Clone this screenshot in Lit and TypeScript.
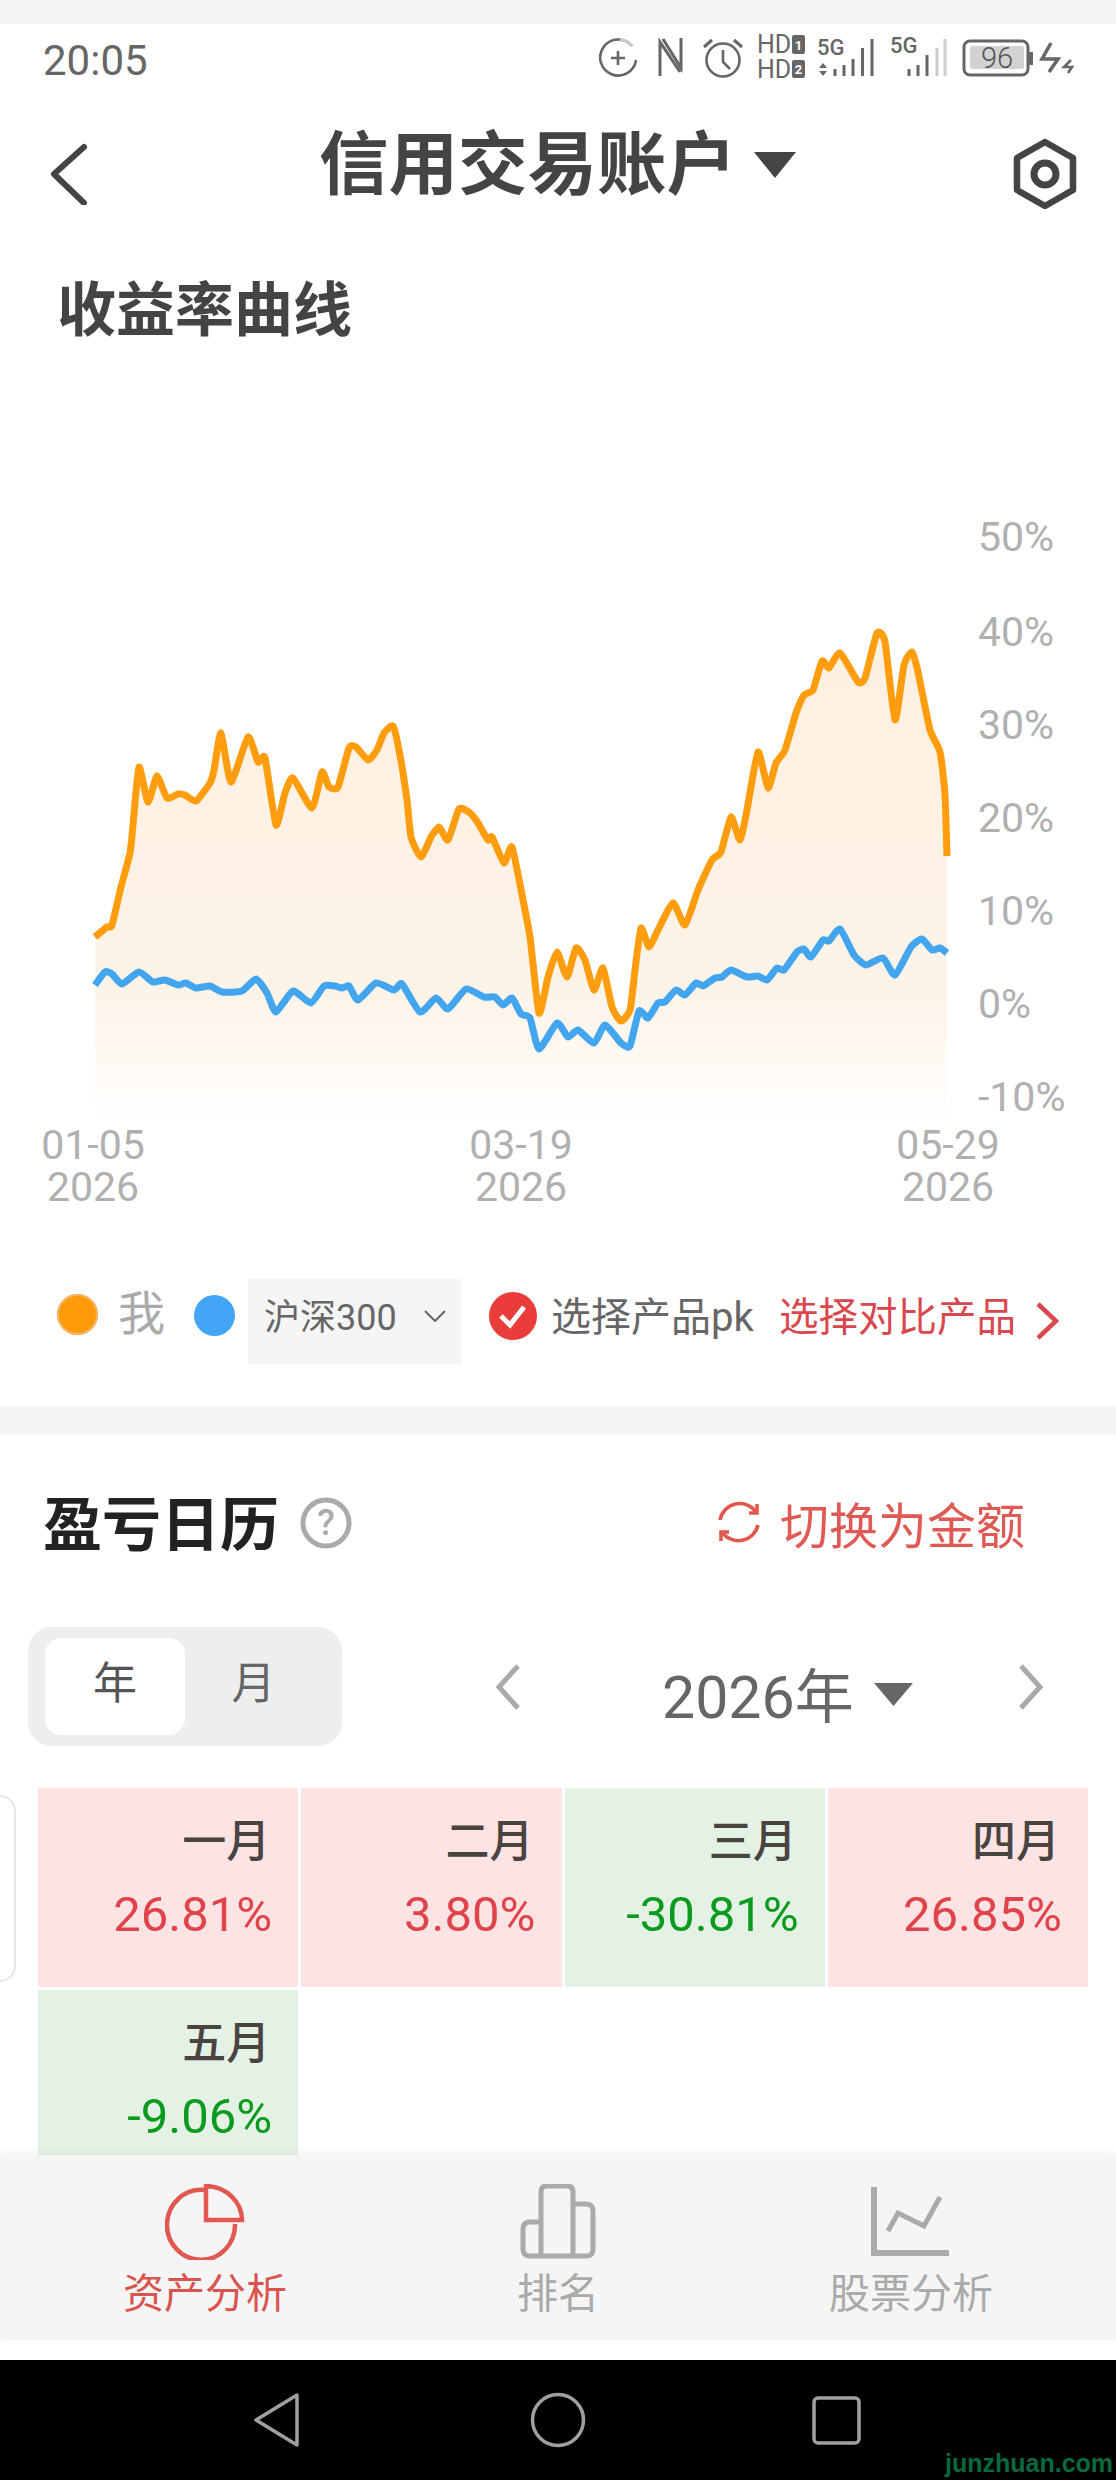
import { LitElement, html, svg, css } from "lit";
import { customElement } from "lit/decorators.js";

type P = [number, number];

const ORANGE: P[] = [[95,937],[107,927],[112,925],[121,887],[130,853],[133,825],[139,767],[148,802],[157,776],[167,798],[178,794],[185,795],[196,801],[210,783],[214,770],[221,733],[231,782],[248,737],[258,762],[265,758],[276,825],[285,793],[293,778],[312,808],[322,772],[329,787],[338,787],[349,748],[356,747],[368,760],[377,750],[384,733],[393,726],[399,750],[407,800],[411,837],[421,857],[431,837],[439,827],[448,840],[459,809],[470,813],[478,823],[488,840],[492,837],[504,863],[512,847],[523,900],[530,937],[539,1013],[548,977],[557,952],[567,977],[576,948],[585,960],[594,990],[603,968],[612,1007],[621,1021],[630,1010],[635,970],[641,928],[649,947],[658,930],[673,903],[685,925],[698,890],[712,860],[721,852],[731,817],[740,840],[747,810],[758,752],[768,788],[776,763],[785,750],[796,713],[804,695],[813,690],[822,661],[829,668],[840,653],[858,682],[865,678],[877,633],[885,642],[895,720],[904,665],[912,652],[918,672],[930,730],[940,752],[945,795],[947,856]];

const BLUE: P[] = [[95,985],[105,972],[112,974],[122,984],[139,972],[153,982],[165,980],[178,985],[186,983],[196,988],[210,986],[222,992],[242,991],[256,979],[267,993],[276,1012],[293,991],[311,1003],[324,986],[335,986],[342,988],[349,986],[358,1000],[376,983],[394,990],[402,984],[420,1012],[436,998],[448,1009],[466,989],[484,997],[495,997],[503,1005],[512,998],[521,1014],[530,1018],[539,1049],[557,1023],[568,1037],[578,1030],[594,1043],[605,1025],[621,1043],[630,1046],[639,1011],[648,1018],[658,1003],[665,1002],[676,990],[685,995],[696,983],[703,986],[715,978],[722,977],[731,970],[747,977],[758,976],[767,980],[777,968],[784,970],[797,952],[804,949],[811,957],[823,940],[829,941],[840,929],[854,955],[866,965],[883,958],[895,975],[911,947],[922,939],[932,950],[940,948],[947,953]];

function smooth(p: P[]): string {
  let d = `M${p[0][0]},${p[0][1]}`;
  const t = 0.55 / 6;
  for (let i = 0; i < p.length - 1; i++) {
    const a = p[Math.max(0, i - 1)], b = p[i], c = p[i + 1], e = p[Math.min(p.length - 1, i + 2)];
    const c1x = b[0] + (c[0] - a[0]) * t, c1y = b[1] + (c[1] - a[1]) * t;
    const c2x = c[0] - (e[0] - b[0]) * t, c2y = c[1] - (e[1] - b[1]) * t;
    d += `C${c1x.toFixed(1)},${c1y.toFixed(1)} ${c2x.toFixed(1)},${c2y.toFixed(1)} ${c[0]},${c[1]}`;
  }
  return d;
}

const MONTHS = [
  { m: "一月", v: "26.81%", up: true },
  { m: "二月", v: "3.80%", up: true },
  { m: "三月", v: "-30.81%", up: false },
  { m: "四月", v: "26.85%", up: true },
  { m: "五月", v: "-9.06%", up: false },
];

const Y_LABELS: [string, number][] = [["50%",537],["40%",632],["30%",725],["20%",818],["10%",911],["0%",1004],["-10%",1097]];
const X_LABELS: [string, number][] = [["01-05",93],["03-19",521],["05-29",948]];

@customElement("app-root")
export class AppRoot extends LitElement {
  static styles = css`
    :host {
      display: flex; flex-direction: column; width: 1116px; height: 2480px; overflow: hidden;
      background: #fff; position: relative;
      font-family: Roboto, "Noto Sans CJK SC", sans-serif; color: #444;
    }
    svg { display: block; flex: none; }
    .strip { height: 24px; background: #f5f5f5; flex: none; }
    .status { height: 72px; flex: none; display: flex; align-items: center; padding-left: 43px; position: relative; }
    .time { font-size: 42px; color: #666; font-weight: 400; width: 556px; }
    .st { fill: #666; font-family: Roboto, sans-serif; }
    .st-hd { font-size: 25px; }
    .st-5g { font-size: 22px; font-weight: 500; }
    .st-num { font-size: 13px; font-weight: 700; fill: #fff; }
    .st-bat { font-size: 29px; font-weight: 300; fill: #555; }
    .nav { height: 138px; flex: none; display: flex; align-items: center; padding-left: 50px; }
    .back { margin-top: 18px; }
    .title { font-size: 69.5px; font-weight: 700; color: #444; margin-left: 232px; width: 419px; white-space: nowrap; line-height: 80px; margin-top: 2px; }
    .title-tri { margin-left: 16px; }
    .gear { margin-left: 216px; margin-top: 18px; }
    .main { flex: none; height: 1921px; overflow: hidden; }
    .curve-title { height: 219px; padding: 47px 0 0 57px; font-size: 59px; font-weight: 700; line-height: 60px; color: #444; }
    .ax { font-size: 41px; fill: #b0b0b0; font-family: Roboto, sans-serif; }
    .legend { height: 186px; box-sizing: border-box; padding: 59px 0 42px 57px; display: flex; align-items: center; }
    .dot { width: 41px; height: 41px; border-radius: 50%; flex: none; }
    .dot.o { background: #ff9a0b; box-shadow: inset 0 0 0 2px #f8b266; margin-bottom: 14px; }
    .dot.b { background: #42a5f5; margin-left: 29px; margin-bottom: 12px; }
    .me { font-size: 47px; color: #aaa; margin-left: 20px; line-height: 60px; margin-bottom: 16px; }
    .sel { width: 214px; height: 85px; box-sizing: border-box; margin-left: 13px; padding-left: 16px; background: #f5f5f5; display: flex; align-items: center; font-size: 36px; color: #666; flex: none; }
    .sel span { width: 160px; white-space: nowrap; padding-bottom: 16px; }
    .sel svg { margin-bottom: 12px; }
    .chk { margin-left: 27px; margin-bottom: 12px; }
    .pk { font-size: 40px; color: #666; margin-left: 14px; white-space: nowrap; width: 203px; margin-bottom: 16px; }
    .link { font-size: 39.5px; color: #d9484f; margin-left: 25px; white-space: nowrap; width: 237px; margin-bottom: 16px; }
    .link-ch { margin-left: 19px; margin-bottom: 2px; }
    .divider { height: 29px; background: #f5f5f5; }
    .cal-head { height: 170px; display: flex; align-items: center; padding-left: 43px; }
    .cal-title { font-size: 59px; font-weight: 700; color: #222; width: 236px; white-space: nowrap; }
    .q { margin-left: 21px; margin-top: 6px; }
    .q-t { font-size: 36px; fill: #aaa; font-family: Roboto, sans-serif; font-weight: 500; }
    .refresh { margin-left: 365px; margin-top: 6px; }
    .switch { font-size: 49px; color: #df5a55; margin-left: 19px; white-space: nowrap; margin-top: 4px; }
    .ctrl { margin: 22px 0 0 28px; height: 119px; display: flex; align-items: center; }
    .toggle { width: 314px; height: 119px; box-sizing: border-box; padding: 11px 0 0 17px; border-radius: 24px; background: #eee; display: flex; align-items: flex-start; flex: none; }
    .tg { height: 97px; display: flex; align-items: center; justify-content: center; font-size: 44px; color: #666; padding-bottom: 14px; box-sizing: border-box; }
    .tg.on { width: 140px; background: #fff; border-radius: 16px; color: #555; }
    .tg.off { width: 137px; }
    .prev { margin-left: 153px; }
    .year { margin-left: 141px; font-size: 59px; color: #666; white-space: nowrap; padding-top: 12px; width: 196px; }
    .ytri { margin-left: 16px; margin-top: 16px; }
    .next { margin-left: 105px; }
    .grid { margin: 42px 0 0 38px; width: 1050px; display: grid; grid-template-columns: repeat(4, 1fr); grid-auto-rows: 199px; gap: 3px; }
    .cell { text-align: right; box-sizing: border-box; padding: 24px 0 0; }
    .cell.up { background: #fde3e3; }
    .cell.down { background: #e3f2e5; }
    .mon { font-size: 44px; line-height: 60px; color: #4a4441; font-weight: 500; padding-right: 28px; }
    .val { font-size: 49px; line-height: 60px; margin-top: 13px; padding-right: 26px; }
    .up .val { color: #e0434a; }
    .down .val { color: #0a9a1e; }
    .sliver { position: absolute; left: -20px; top: 1795px; width: 36px; height: 187px; box-sizing: border-box; border: 2px solid #e6e6e6; border-radius: 16px; background: #fff; }
    .tabs { height: 185px; flex: none; box-sizing: border-box; background: #f5f5f5; box-shadow: 0 -2px 8px rgba(0,0,0,.06); padding-left: 55px; display: flex; gap: 53px; position: relative; }
    .tab { width: 300px; display: flex; flex-direction: column; align-items: center; padding-top: 29px; font-size: 41px; color: #aaa; }
    .tab.on { color: #d9534f; }
    .tab span { line-height: 60px; margin-top: 4px; white-space: nowrap; }
    .gap { height: 20px; flex: none; background: #fff; }
    .sys { height: 120px; flex: none; background: #000; }
    .wm { font-family: "Liberation Sans", sans-serif; font-weight: 700; font-size: 25px; fill: #0a6a3c; }
  `;

  render() {
    const o = smooth(ORANGE);
    const b = smooth(BLUE);
    const fill = `${o}L947,1125L95,1125Z`;
    return html`
      <div class="strip"></div>
      <div class="status">
        <div class="time">20:05</div>
        <svg width="480" height="72" viewBox="599 24 480 72">
          <g fill="none" stroke="#666" stroke-width="2.6">
            <path d="M632,46A18,18 0 1 0 636,60" />
            <path d="M620,39.5A18,18 0 0 1 632,46" stroke="#ccc" />
            <path d="M611,58H625M618,51V65" />
            <path d="M660,76V42L680,72M663,39L681,68V38" stroke-width="3" />
            <circle cx="723" cy="60" r="16.5" />
            <path d="M723,50V62L730,69" />
            <path d="M704,47L712,40M742,47L734,40" stroke-width="3" />
          </g>
          <text class="st st-hd" x="757" y="53">HD</text>
          <text class="st st-hd" x="757" y="78">HD</text>
          <rect x="792" y="35" width="13" height="19" rx="2" fill="#666" />
          <rect x="792" y="60" width="13" height="18" rx="2" fill="#666" />
          <text class="st-num" x="798.5" y="49.5" text-anchor="middle">1</text>
          <text class="st-num" x="798.5" y="74" text-anchor="middle">2</text>
          <text class="st st-5g" x="817" y="55">5G</text>
          <path d="M823,63L827,68H819ZM823,76L827,71H819Z" fill="#666" />
          <g stroke="#666" stroke-width="3" fill="none">
            <path d="M835,76V69M844,76V65M853,76V59M862.5,76V48M872,76V39" />
          </g>
          <text class="st st-5g" x="890" y="53">5G</text>
          <g stroke="#666" stroke-width="3" fill="none">
            <path d="M909,76V69M918,76V65M927,76V55" />
          </g>
          <g stroke="#ccc" stroke-width="3" fill="none">
            <path d="M937,76V48M945,76V39" />
          </g>
          <rect x="964" y="41" width="64" height="34" rx="6" fill="none" stroke="#666" stroke-width="3" />
          <rect x="970" y="46" width="54" height="23" rx="2" fill="#d2d2d2" />
          <rect x="1029" y="52" width="4" height="13" fill="#666" />
          <text class="st st-bat" x="997" y="68" text-anchor="middle">96</text>
          <path d="M1051,43L1042,59H1058L1049,72" fill="none" stroke="#666" stroke-width="3.5" />
          <path d="M1071,60L1064,67H1072L1068,73" fill="none" stroke="#666" stroke-width="2.6" />
        </svg>
      </div>
      <div class="nav">
        <svg class="back" width="37" height="62" viewBox="51 143 37 62">
          <path d="M85,147L55,174L85,203" fill="none" stroke="#444" stroke-width="6" stroke-linecap="round" stroke-linejoin="round" />
        </svg>
        <div class="title">信用交易账户</div>
        <svg class="title-tri" width="42" height="26" viewBox="0 0 42 26"><path d="M0,0H42L21,26Z" fill="#444" /></svg>
        <svg class="gear" width="66" height="72" viewBox="1014 138 66 72">
          <path d="M1047,142L1075,158V190L1047,206L1019,190V158Z" fill="none" stroke="#444" stroke-width="6.5" stroke-linejoin="round" />
          <circle cx="1047" cy="174" r="11" fill="none" stroke="#444" stroke-width="7" />
        </svg>
      </div>
      <div class="main">
        <div class="curve-title">收益率曲线</div>
        <svg width="1116" height="720" viewBox="0 500 1116 720">
          <defs>
            <linearGradient id="area" gradientUnits="userSpaceOnUse" x1="0" y1="630" x2="0" y2="1125">
              <stop offset="0" stop-color="#fdf0e1" />
              <stop offset="0.72" stop-color="#fdf3e7" />
              <stop offset="1" stop-color="#ffffff" />
            </linearGradient>
          </defs>
          <path d=${fill} fill="url(#area)" />
          <path d=${o} fill="none" stroke="#ff9d0f" stroke-width="7" stroke-linejoin="round" />
          <path d=${b} fill="none" stroke="#42a5ee" stroke-width="7" stroke-linejoin="round" />
          ${Y_LABELS.map(([t, y]) => svg`<text class="ax" x="978" y=${y + 14}>${t}</text>`)}
          ${X_LABELS.map(([t, x]) => svg`
            <text class="ax" text-anchor="middle"><tspan x=${x} y="1159">${t}</tspan><tspan x=${x} y="1201">2026</tspan></text>`)}
        </svg>
        <div class="legend">
          <div class="dot o"></div>
          <div class="me">我</div>
          <div class="dot b"></div>
          <div class="sel">
            <span>沪深300</span>
            <svg width="22" height="12" viewBox="0 0 22 12"><path d="M1,1L11,11L21,1" fill="none" stroke="#666" stroke-width="2" /></svg>
          </div>
          <svg class="chk" width="48" height="48" viewBox="0 0 48 48">
            <circle cx="24" cy="24" r="24" fill="#ea3d3a" />
            <path d="M12,24L21,33L35,15" fill="none" stroke="#fff" stroke-width="5" />
          </svg>
          <div class="pk">选择产品pk</div>
          <div class="link">选择对比产品</div>
          <svg class="link-ch" width="24" height="38" viewBox="0 0 24 38"><path d="M3,2L21,19L3,36" fill="none" stroke="#d9484f" stroke-width="4.5" /></svg>
        </div>
        <div class="divider"></div>
        <div class="cal-head">
          <div class="cal-title">盈亏日历</div>
          <svg class="q" width="52" height="52" viewBox="0 0 52 52">
            <circle cx="26" cy="26" r="23" fill="none" stroke="#aaa" stroke-width="5" />
            <text class="q-t" x="26" y="38" text-anchor="middle">?</text>
          </svg>
          <svg class="refresh" width="44" height="44" viewBox="716 1502 44 44">
            <g fill="none" stroke="#e0584f" stroke-width="3.6">
              <path d="M755,1513A20,20 0 0 0 719,1521" />
              <path d="M721,1533A20,20 0 0 0 757,1526" />
              <path d="M748,1514H756V1505" />
              <path d="M728,1533H720V1542" />
            </g>
          </svg>
          <div class="switch">切换为金额</div>
        </div>
        <div class="ctrl">
          <div class="toggle">
            <div class="tg on">年</div>
            <div class="tg off">月</div>
          </div>
          <svg class="prev" width="26" height="46" viewBox="0 0 26 46"><path d="M23,2L4,23L23,44" fill="none" stroke="#aaa" stroke-width="5" /></svg>
          <div class="year">2026年</div>
          <svg class="ytri" width="39" height="23" viewBox="0 0 39 23"><path d="M0,0H39L19.5,23Z" fill="#666" /></svg>
          <svg class="next" width="26" height="46" viewBox="0 0 26 46"><path d="M3,2L22,23L3,44" fill="none" stroke="#aaa" stroke-width="5" /></svg>
        </div>
        <div class="grid">
          ${MONTHS.map((c) => html`
            <div class="cell ${c.up ? "up" : "down"}">
              <div class="mon">${c.m}</div>
              <div class="val">${c.v}</div>
            </div>`)}
        </div>
      </div>
      <div class="sliver"></div>
      <div class="tabs">
        <div class="tab on">
          <svg width="80" height="76" viewBox="165 2184 80 76">
            <g fill="none" stroke="#e0584f" stroke-width="4.5">
              <path d="M204,2190A34,35 0 1 0 235,2224" />
              <path d="M206,2186V2220H242A37,34 0 0 0 206,2186Z" />
            </g>
          </svg>
          <span>资产分析</span>
        </div>
        <div class="tab">
          <svg width="80" height="76" viewBox="518 2184 80 76">
            <path d="M541,2256V2192Q541,2186 547,2186H567Q573,2186 573,2192V2256M573,2204H586Q593,2204 593,2211V2249Q593,2256 586,2256H530Q523,2256 523,2249V2229Q523,2222 530,2222H541" fill="none" stroke="#aaa" stroke-width="5" />
          </svg>
          <span>排名</span>
        </div>
        <div class="tab">
          <svg width="80" height="76" viewBox="872 2184 80 76">
            <path d="M875,2187V2253H950" fill="none" stroke="#aaa" stroke-width="6" />
            <path d="M889,2231L899,2213L925,2226L941,2197" fill="none" stroke="#aaa" stroke-width="5" />
          </svg>
          <span>股票分析</span>
        </div>
      </div>
      <div class="gap"></div>
      <div class="sys">
        <svg width="1116" height="120" viewBox="0 2360 1116 120">
          <g fill="none" stroke="#a0a0a0" stroke-width="3.5" stroke-linejoin="round">
            <path d="M297,2395V2445L256,2420Z" />
            <circle cx="558" cy="2420" r="25.5" />
            <rect x="814" y="2398" width="45" height="45" rx="4" />
          </g>
          <text class="wm" x="945" y="2472">junzhuan.com</text>
        </svg>
      </div>
    `;
  }
}
